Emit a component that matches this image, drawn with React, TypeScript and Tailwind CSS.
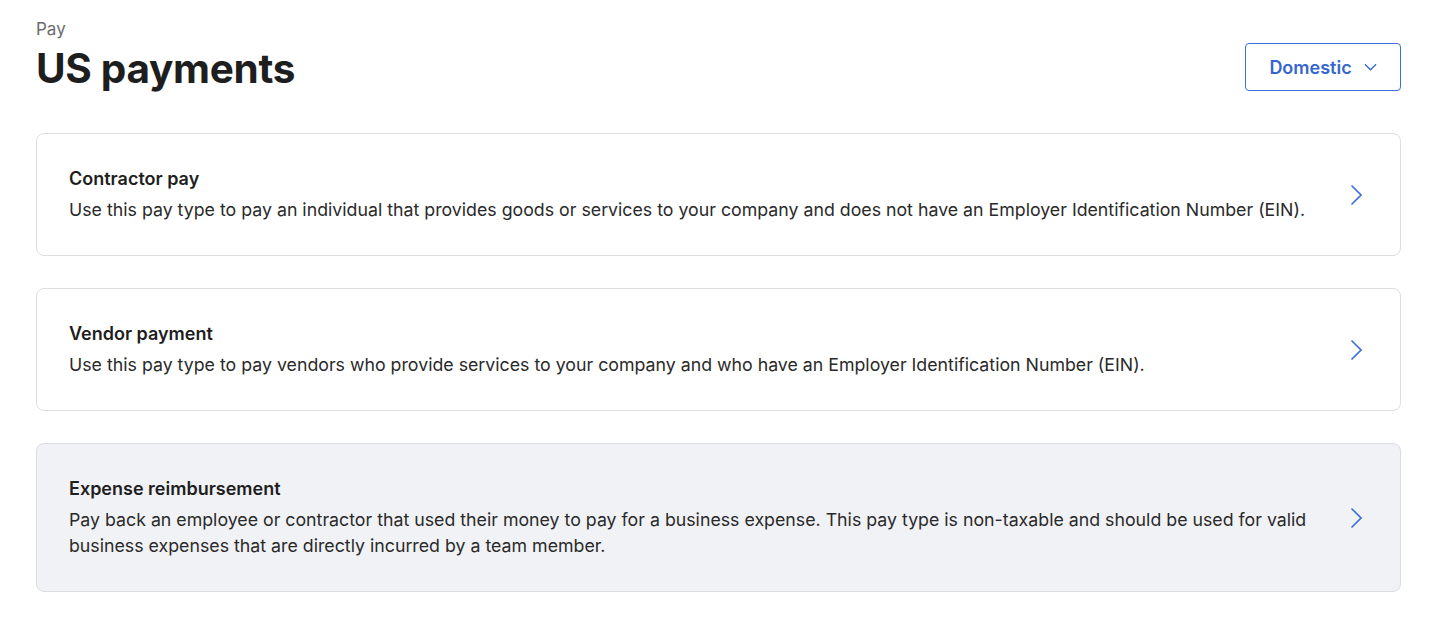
import React from "react";

const items = [
  {
    title: "Contractor pay",
    desc: "Use this pay type to pay an individual that provides goods or services to your company and does not have an Employer Identification Number (EIN).",
  },
  {
    title: "Vendor payment",
    desc: "Use this pay type to pay vendors who provide services to your company and who have an Employer Identification Number (EIN).",
  },
  {
    title: "Expense reimbursement",
    desc: "Pay back an employee or contractor that used their money to pay for a business expense. This pay type is non-taxable and should be used for valid business expenses that are directly incurred by a team member.",
    active: true,
  },
];

function Chevron({ className }: { className?: string }) {
  return (
    <svg viewBox="0 0 12 22" width="12" height="22" fill="none" className={className}>
      <path d="M1.5 1.5 11 11 1.5 20.5" stroke="currentColor" strokeWidth="1.6" />
    </svg>
  );
}

export default function App() {
  return (
    <div className="min-h-screen bg-white pl-9 pr-[29px] pt-[17px] font-['Inter',sans-serif] text-[#1e1e1e]">
      <div className="flex items-start justify-between">
        <div>
          <div className="text-[17px] leading-6 text-[#6b6b6b]">Pay</div>
          <h1 className="mt-1 text-[40.5px] font-bold leading-[48px] tracking-[-0.3px]">US payments</h1>
        </div>
        <button className="mt-[26px] flex h-12 w-[156px] items-center justify-center gap-3 rounded-[4px] border border-[#3b6fd8] text-[18px] font-semibold text-[#3566d0]">
          Domestic
          <svg viewBox="0 0 14 8" width="13" height="8" fill="none">
            <path d="M1 1l6 6 6-6" stroke="currentColor" strokeWidth="1.4" />
          </svg>
        </button>
      </div>
      <div className="mt-[40px] flex flex-col gap-8">
        {items.map((it) => (
          <div
            key={it.title}
            className={`flex items-center justify-between rounded-lg border border-[#dcdde2] pt-[33px] pb-[32px] pl-8 pr-[38px] ${it.active ? "bg-[#f1f2f6]" : "bg-white"}`}
          >
            <div className="max-w-[1250px]">
              <div className="text-[18px] font-semibold leading-6">{it.title}</div>
              <div className="mt-[6px] text-[17.75px] leading-[26px] text-[#2a2a2a]">{it.desc}</div>
            </div>
            <Chevron className="text-[#3b6fd8]" />
          </div>
        ))}
      </div>
    </div>
  );
}
